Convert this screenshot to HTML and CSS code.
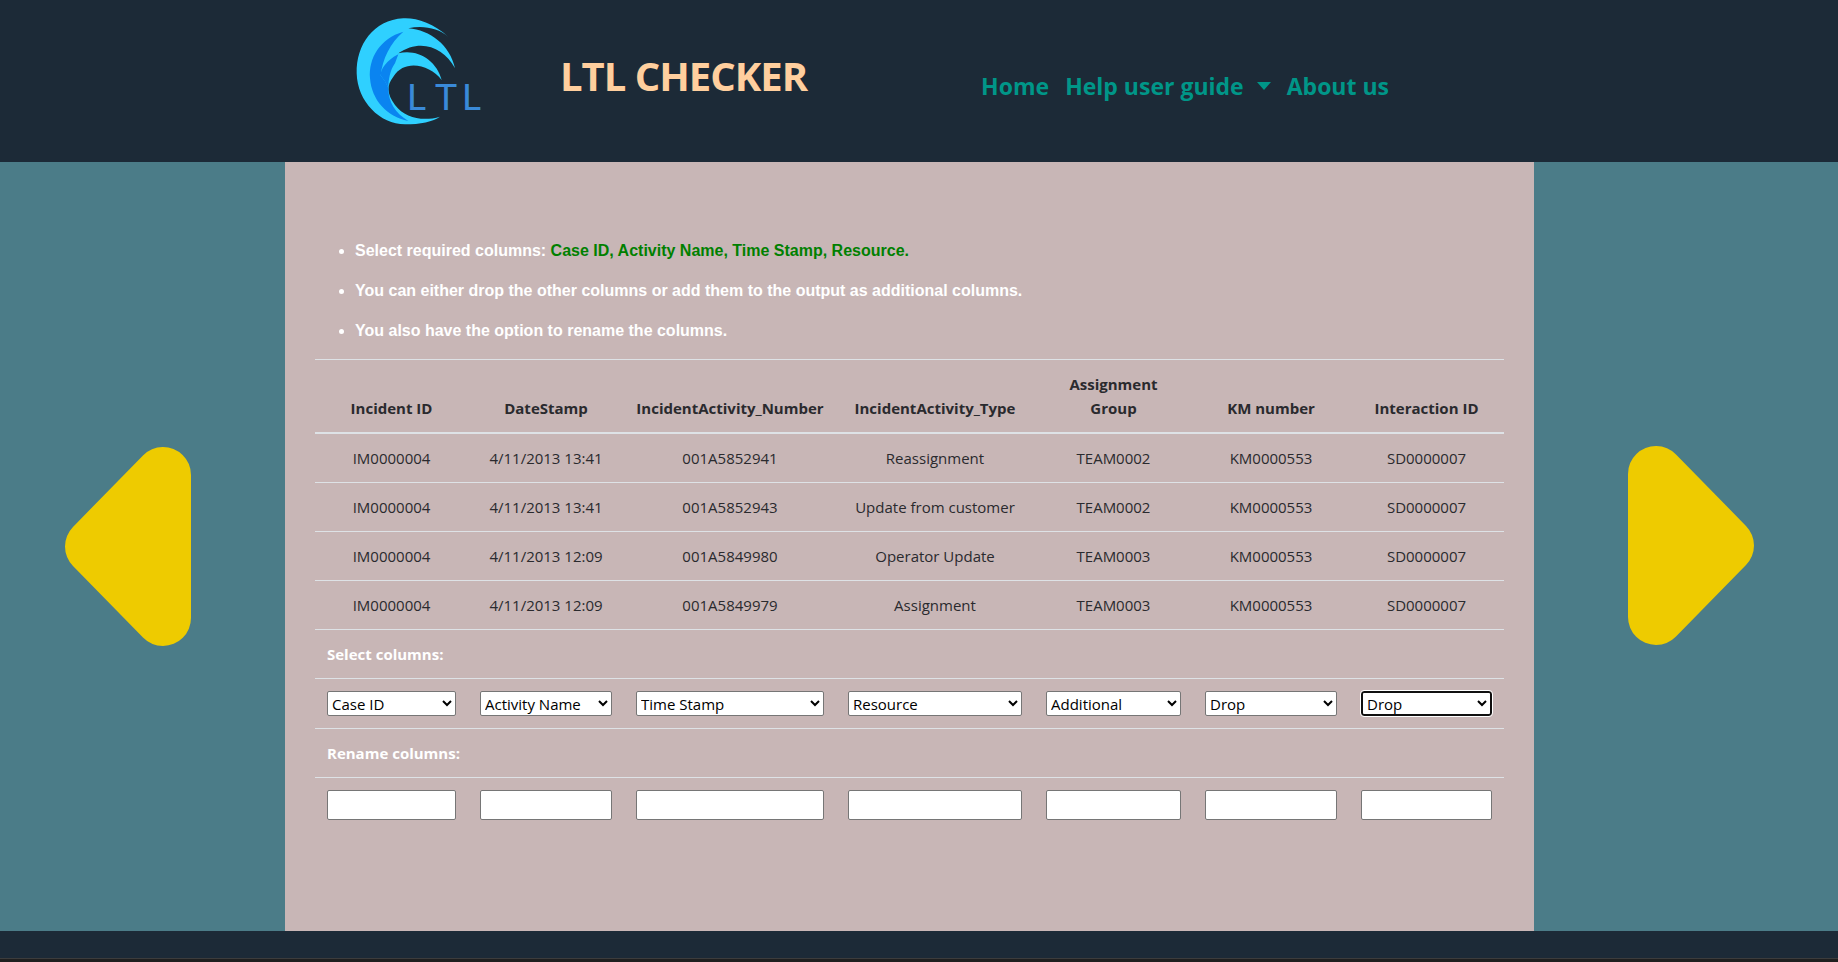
FILE: index.html
```html
<!DOCTYPE html>
<html>
<head>
<meta charset="utf-8" />
<title>LTL Checker</title>
<link rel="stylesheet" href="styles.css">
</head>
<body>

<header class="topbar">
	<svg class="logo" viewBox="0 0 450 390" aria-label="LTL logo">
		<path fill="#2fd0ff" d="M325 95 C280 55 230 38 190 40 C100 45 48 120 50 205 C52 290 120 358 195 358 C240 358 280 350 300 335 C250 350 195 340 165 300 C140 265 140 240 160 215 C195 160 270 180 305 225 C290 165 230 130 175 145 C240 100 310 125 345 190 C330 120 270 75 205 70 C250 60 295 70 325 95 Z"/>
		<path fill="#0a84f0" d="M190 80 C120 100 85 160 90 220 C95 285 140 335 205 348 C165 325 145 290 145 250 C140 235 132 222 122 212 C128 160 150 115 190 80 Z"/>
		<path fill="#0a84f0" d="M175 148 C140 165 120 195 122 212 C130 220 140 235 145 250 C145 225 150 195 165 175 Z"/>
		<text class="logo-text" x="200 285 365" y="315">LTL</text>
	</svg>
	<div class="brand">LTL CHECKER</div>
	<nav class="menu">
		<a href="#">Home</a>
		<a href="#" class="dropdown">Help user guide</a>
		<a href="#">About us</a>
	</nav>
</header>

<div class="page">
	<aside class="side side-left">
		<svg class="arrow" viewBox="0 0 126 199"><polygon points="98,28 98,171 28,99.5"/></svg>
	</aside>

	<main class="content">
		<ul class="rules">
			<li>Select required columns: <span class="required">Case ID, Activity Name, Time Stamp, Resource.</span></li>
			<li>You can either drop the other columns or add them to the output as additional columns.</li>
			<li>You also have the option to rename the columns.</li>
		</ul>

		<table class="columns">
			<colgroup>
				<col class="c1"><col class="c2"><col class="c3"><col class="c4"><col class="c5"><col class="c6"><col class="c7">
			</colgroup>
			<thead>
				<tr><th>Incident ID</th><th>DateStamp</th><th>IncidentActivity_Number</th><th>IncidentActivity_Type</th><th>Assignment Group</th><th>KM number</th><th>Interaction ID</th></tr>
			</thead>
			<tbody>
				<tr><td>IM0000004</td><td>4/11/2013 13:41</td><td>001A5852941</td><td>Reassignment</td><td>TEAM0002</td><td>KM0000553</td><td>SD0000007</td></tr>
				<tr><td>IM0000004</td><td>4/11/2013 13:41</td><td>001A5852943</td><td>Update from customer</td><td>TEAM0002</td><td>KM0000553</td><td>SD0000007</td></tr>
				<tr><td>IM0000004</td><td>4/11/2013 12:09</td><td>001A5849980</td><td>Operator Update</td><td>TEAM0003</td><td>KM0000553</td><td>SD0000007</td></tr>
				<tr><td>IM0000004</td><td>4/11/2013 12:09</td><td>001A5849979</td><td>Assignment</td><td>TEAM0003</td><td>KM0000553</td><td>SD0000007</td></tr>
				<tr><td colspan="7" class="label">Select columns:</td></tr>
				<tr class="tight">
					<td><select><option selected>Case ID</option><option>Activity Name</option><option>Time Stamp</option><option>Resource</option><option>Additional</option><option>Drop</option></select></td>
					<td><select><option>Case ID</option><option selected>Activity Name</option><option>Time Stamp</option><option>Resource</option><option>Additional</option><option>Drop</option></select></td>
					<td><select><option>Case ID</option><option>Activity Name</option><option selected>Time Stamp</option><option>Resource</option><option>Additional</option><option>Drop</option></select></td>
					<td><select><option>Case ID</option><option>Activity Name</option><option>Time Stamp</option><option selected>Resource</option><option>Additional</option><option>Drop</option></select></td>
					<td><select><option>Case ID</option><option>Activity Name</option><option>Time Stamp</option><option>Resource</option><option selected>Additional</option><option>Drop</option></select></td>
					<td><select><option>Case ID</option><option>Activity Name</option><option>Time Stamp</option><option>Resource</option><option>Additional</option><option selected>Drop</option></select></td>
					<td><select class="focused"><option>Case ID</option><option>Activity Name</option><option>Time Stamp</option><option>Resource</option><option>Additional</option><option selected>Drop</option></select></td>
				</tr>
				<tr><td colspan="7" class="label">Rename columns:</td></tr>
				<tr class="tight">
					<td><input type="text"></td><td><input type="text"></td><td><input type="text"></td><td><input type="text"></td><td><input type="text"></td><td><input type="text"></td><td><input type="text"></td>
				</tr>
			</tbody>
		</table>
	</main>

	<aside class="side side-right">
		<svg class="arrow" viewBox="0 0 126 199"><polygon points="28,28 28,171 98,99.5"/></svg>
	</aside>
</div>

<footer class="bottombar"></footer>
<div class="strip"></div>

</body>
</html>
```

FILE: styles.css
```css
:root {
	--sombre : #1c2a37;
	--teal : #4b7c88;
	--rose : #c8b6b6;
	--ligne : #dee2e6;
}
* { box-sizing : border-box; }
body {
	margin : 0;
	height : 962px;
	display : flex;
	flex-direction : column;
	overflow : hidden;
	font-family : "Open Sans", "Noto Sans", sans-serif;
	background : #1f1f1f;
}

/* entete */
.topbar {
	height : 162px;
	flex : none;
	display : flex;
	align-items : flex-start;
	padding-left : 340px;
	background : var(--sombre);
}
.logo { width : 150px; height : 130px; margin-top : 5px; }
.logo-text {
	font-family : "Lato", "Open Sans", sans-serif;
	font-size : 112px;
	font-weight : 400;
	fill : #3a8ad8;
}
.brand {
	margin : 50px 0 0 70px;
	font-size : 40px;
	line-height : 52px;
	font-weight : 700;
	letter-spacing : -1px;
	color : #ffcf9e;
}
.menu {
	display : flex;
	align-items : center;
	margin : 68px 0 0 174px;
}
.menu a {
	font-size : 23px;
	line-height : 36px;
	font-weight : 700;
	color : #009688;
	text-decoration : none;
	margin-right : 16px;
}
.dropdown::after {
	content : "";
	display : inline-block;
	margin-left : 13px;
	vertical-align : 5px;
	border-top : 8px solid #009688;
	border-left : 7px solid transparent;
	border-right : 7px solid transparent;
}

/* milieu */
.page { flex : 1; display : flex; }
.side {
	flex : none;
	width : 285px;
	display : flex;
	align-items : center;
	background : var(--teal);
}
.side-left { padding-left : 65px; }
.side-right { width : 304px; padding-left : 94px; padding-bottom : 2px; }
.arrow { width : 126px; height : 199px; }
.arrow polygon {
	fill : #eecb00;
	stroke : #eecb00;
	stroke-width : 56;
	stroke-linejoin : round;
}
.content {
	flex : 1;
	padding : 77px 30px 0;
	background : var(--rose);
}

/* consignes */
.rules {
	margin : 0 0 1px;
	padding-left : 40px;
	font-family : "Liberation Sans", Arial, sans-serif;
	font-size : 16px;
	line-height : 24px;
	font-weight : 700;
	color : #fff;
}
.rules li { margin-bottom : 16px; }
.required { color : #008000; }

/* tableau */
.columns {
	width : 1189px;
	table-layout : fixed;
	border-collapse : collapse;
	font-size : 15px;
	line-height : 24px;
	color : #2a2a2e;
}
.c1 { width : 153px; }
.c2 { width : 156px; }
.c3 { width : 212px; }
.c4 { width : 198px; }
.c5 { width : 159px; }
.c6 { width : 156px; }
.c7 { width : 155px; }
.columns th, .columns td {
	padding : 12px;
	text-align : center;
	border-top : 1px solid var(--ligne);
}
.columns th {
	vertical-align : bottom;
	font-weight : 700;
	border-bottom : 2px solid var(--ligne);
}
.columns .label {
	text-align : left;
	font-weight : 700;
	font-size : 15px;
	color : #fff;
}
.columns .tight td { padding : 12px; line-height : 0; }
select, input {
	width : 100%;
	margin : 0;
	background : #fff;
	border : 1px solid #767676;
	border-radius : 2px;
}
select {
	height : 25px;
	padding : 0;
	font-family : "Open Sans", sans-serif;
	font-size : 15px;
	color : #000;
}
input { height : 30px; vertical-align : top; }
select.focused {
	border : 2px solid #101010;
	border-radius : 3px;
	outline : 1px solid #fff;
}

/* pied */
.bottombar { flex : none; height : 27px; background : var(--sombre); }
.strip { flex : none; height : 4px; border-top : 1px solid #3c3c3c; background : #1f1f1f; }
```
